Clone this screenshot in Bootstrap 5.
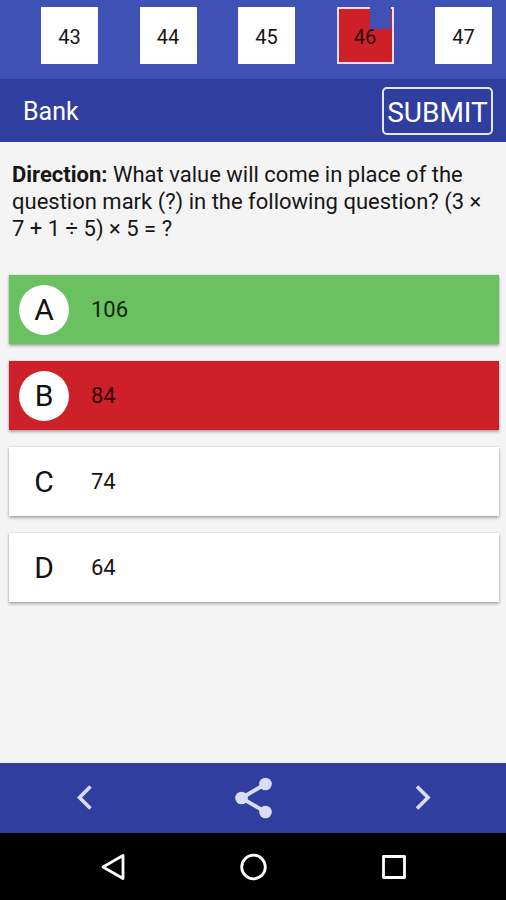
<!DOCTYPE html>
<html lang="en">
<head>
<meta charset="utf-8">
<meta name="viewport" content="width=device-width, initial-scale=1">
<title>Bank quiz</title>
<link rel="stylesheet" href="https://cdn.jsdelivr.net/npm/bootstrap@5.3.0/dist/css/bootstrap.min.css">
<style>
body { font-family: Roboto, "Liberation Sans", sans-serif; background: #f4f4f4; color: #161616; }
button { border: 0; background: none; padding: 0; color: inherit; }
.strip { background: #3f51b5; padding: 7px 14px 15px 41px; }
.num { width: 57px; height: 57px; padding-top: 2px; font-size: 20px; background: #fff; color: #161616; }
.num.wrong { background: #cd2028; border: 2px solid #f3dcea; color: #300808; }
.flag { position: absolute; top: -2px; right: 1px; width: 21px; height: 22px; background: #3f51b5; }
.num-label { position: relative; }
.titlebar { background: #303f9f; color: #fff; height: 63px; padding: 0 13px 0 23px; }
.titlebar h1 { font-size: 25px; padding-top: 3px; }
.submit { font-size: 28px; line-height: 44px; padding-top: 2px; height: 48px; width: 111px; border: 2px solid #e4e7fa; border-radius: 5px; }
.question { font-size: 22px; line-height: 27px; padding: 19px 12px 33px; }
.options { padding: 0 7px 0 9px; gap: 17px; }
.option { height: 69px; padding: 0 10px; gap: 22px; background: #fff; font-size: 22px; box-shadow: 0 2px 3px rgba(0,0,0,.3), 0 0 2px rgba(0,0,0,.15); }
.option.right { background: #6ac160; color: #10240e; }
.option.wrong { background: #cd2028; color: #300506; }
.letter { width: 50px; height: 50px; font-size: 30px; background: #fff; color: #111; }
.pager { background: #303f9f; color: #d9ddf3; height: 70px; }
.system { background: #000; color: #fff; height: 67px; padding: 0 42px; }
.pager button, .system button { height: 100%; }
</style>
</head>
<body>
<div class="d-flex flex-column min-vh-100">
  <nav class="strip d-flex justify-content-between" aria-label="Questions">
    <button class="num">43</button>
    <button class="num">44</button>
    <button class="num">45</button>
    <button class="num wrong position-relative"><span class="flag"></span><span class="num-label">46</span></button>
    <button class="num">47</button>
  </nav>
  <header class="titlebar d-flex align-items-center justify-content-between">
    <h1 class="m-0 fw-normal">Bank</h1>
    <button class="submit text-center text-nowrap">SUBMIT</button>
  </header>
  <main class="flex-grow-1">
    <p class="question m-0"><strong>Direction:</strong> What value will come in place of the question mark (?) in the following question? (3 × 7 + 1 ÷ 5) × 5 = ?</p>
    <div class="options d-flex flex-column">
      <button class="option right d-flex align-items-center text-start"><span class="letter rounded-circle d-flex align-items-center justify-content-center">A</span><span>106</span></button>
      <button class="option wrong d-flex align-items-center text-start"><span class="letter rounded-circle d-flex align-items-center justify-content-center">B</span><span>84</span></button>
      <button class="option d-flex align-items-center text-start"><span class="letter rounded-circle d-flex align-items-center justify-content-center">C</span><span>74</span></button>
      <button class="option d-flex align-items-center text-start"><span class="letter rounded-circle d-flex align-items-center justify-content-center">D</span><span>64</span></button>
    </div>
  </main>
  <nav class="pager d-flex" aria-label="Question actions">
    <button class="flex-fill" aria-label="Previous"><svg width="40" height="40" viewBox="0 0 40 40" fill="none" stroke="currentColor" stroke-width="3.6"><path d="M26.500 8.500 15.500 19.500 26.500 30.500"/></svg></button>
    <button class="flex-fill" aria-label="Share"><svg width="44" height="44" viewBox="0 0 44 44" fill="currentColor"><path d="M34.500 8 10.500 22 34.500 36" fill="none" stroke="currentColor" stroke-width="3.8"/><circle cx="34.500" cy="8" r="6.3"/><circle cx="10.500" cy="22" r="6.3"/><circle cx="34.500" cy="36" r="6.3"/></svg></button>
    <button class="flex-fill" aria-label="Next"><svg width="40" height="40" viewBox="0 0 40 40" fill="none" stroke="currentColor" stroke-width="3.6"><path d="M15 8.500 26 19.500 15 30.500"/></svg></button>
  </nav>
  <nav class="system d-flex" aria-label="System">
    <button class="flex-fill" aria-label="Back"><svg width="32" height="32" viewBox="0 0 32 32" fill="none" stroke="currentColor" stroke-width="2.8" stroke-linejoin="round"><path d="M27 4.500V27.500L7 16Z"/></svg></button>
    <button class="flex-fill" aria-label="Home"><svg width="32" height="32" viewBox="0 0 32 32" fill="none" stroke="currentColor" stroke-width="2.8"><circle cx="16.500" cy="16" r="11.8"/></svg></button>
    <button class="flex-fill" aria-label="Recent apps"><svg width="32" height="32" viewBox="0 0 32 32" fill="none" stroke="currentColor" stroke-width="2.8" stroke-linejoin="round"><rect x="5.500" y="5.500" width="21" height="21"/></svg></button>
  </nav>
</div>
<script src="https://cdn.jsdelivr.net/npm/bootstrap@5.3.0/dist/js/bootstrap.bundle.min.js"></script>
</body>
</html>
